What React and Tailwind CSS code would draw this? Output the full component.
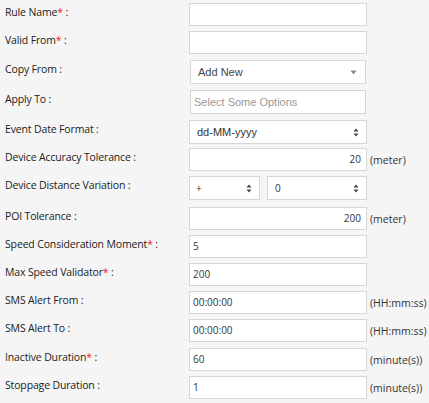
import React from 'react';

const label = "font-['Open_Sans',sans-serif] text-[10.5px] leading-[14px] font-medium tracking-[-0.15px] text-[#222]";
const box = 'h-[23px] bg-white border border-[#d6d6d6] text-[10px] text-[#333] flex items-center px-[3px]';

function Star() {
  return <span className="text-[#e22]">*</span>;
}

function Updown() {
  return (
    <svg width="6" height="9" viewBox="0 0 6 9" className="ml-auto">
      <path d="M3 0.5 L5.5 3.5 H0.5 Z M3 8.5 L5.5 5.5 H0.5 Z" fill="#444" />
    </svg>
  );
}

function Row({ name, req, h, children }) {
  return (
    <div className="flex items-start" style={{ height: h }}>
      <div className={`w-[189px] pl-[5px] pt-[2px] ${label}`}>
        {name}
        {req && <Star />} :
      </div>
      <div className="flex items-start">{children}</div>
    </div>
  );
}

function Unit({ children }) {
  return (
    <span className="ml-[3px] mt-[5px] font-['Open_Sans',sans-serif] text-[10.5px] leading-[14px] text-[#333]">
      {children}
    </span>
  );
}

export default function App() {
  return (
    <div className="w-[429px] h-[403px] bg-[#f5f5f5] pt-[3px] font-['Open_Sans',sans-serif] overflow-hidden">
      <Row name="Rule Name" req h={28}>
        <div className={`${box} w-[178px]`} />
      </Row>
      <Row name="Valid From" req h={29}>
        <div className={`${box} w-[178px]`} />
      </Row>
      <Row name="Copy From" h={30}>
        <div className={`${box} ml-[1px] w-[176px] h-[24px] pl-[7px] pr-[8px] font-['Liberation_Sans',sans-serif] text-[11px] text-[#444]`}>
          Add New
          <svg width="7" height="5" viewBox="0 0 7 5" className="ml-auto">
            <path d="M0.5 0.5 H6.5 L3.5 4.5 Z" fill="#888" />
          </svg>
        </div>
      </Row>
      <Row name="Apply To" h={30}>
        <div className={`${box} ml-[1px] w-[176px] h-[24px] pl-[3px] font-['Liberation_Sans',sans-serif] text-[11px] text-[#999]`}>
          Select Some Options
        </div>
      </Row>
      <Row name="Event Date Format" h={28}>
        <div className={`${box} w-[178px] h-[24px] pl-[7px] pr-[7px] font-['Liberation_Sans',sans-serif] text-[11px] text-[#222]`}>
          dd-MM-yyyy
          <Updown />
        </div>
      </Row>
      <Row name="Device Accuracy Tolerance" h={28}>
        <div className={`${box} w-[178px] justify-end pr-[5px]`}>20</div>
        <Unit>(meter)</Unit>
      </Row>
      <Row name="Device Distance Variation" h={31}>
        <div className={`${box} w-[71px] h-[24px] pl-[6px] pr-[7px] text-[#222]`}>
          +
          <Updown />
        </div>
        <div className={`${box} ml-[7px] w-[100px] h-[24px] pl-[7px] pr-[7px] text-[#222]`}>
          0
          <Updown />
        </div>
      </Row>
      <Row name="POI Tolerance" h={28}>
        <div className={`${box} w-[178px] justify-end pr-[5px]`}>200</div>
        <Unit>(meter)</Unit>
      </Row>
      <Row name="Speed Consideration Moment" req h={28}>
        <div className={`${box} w-[178px]`}>5</div>
      </Row>
      <Row name="Max Speed Validator" req h={28}>
        <div className={`${box} w-[178px]`}>200</div>
      </Row>
      <Row name="SMS Alert From" h={28}>
        <div className={`${box} w-[178px]`}>00:00:00</div>
        <Unit>(HH:mm:ss)</Unit>
      </Row>
      <Row name="SMS Alert To" h={29}>
        <div className={`${box} w-[178px]`}>00:00:00</div>
        <Unit>(HH:mm:ss)</Unit>
      </Row>
      <Row name="Inactive Duration" req h={28}>
        <div className={`${box} w-[178px]`}>60</div>
        <Unit>(minute(s))</Unit>
      </Row>
      <Row name="Stoppage Duration" h={28}>
        <div className={`${box} w-[178px]`}>1</div>
        <Unit>(minute(s))</Unit>
      </Row>
    </div>
  );
}
